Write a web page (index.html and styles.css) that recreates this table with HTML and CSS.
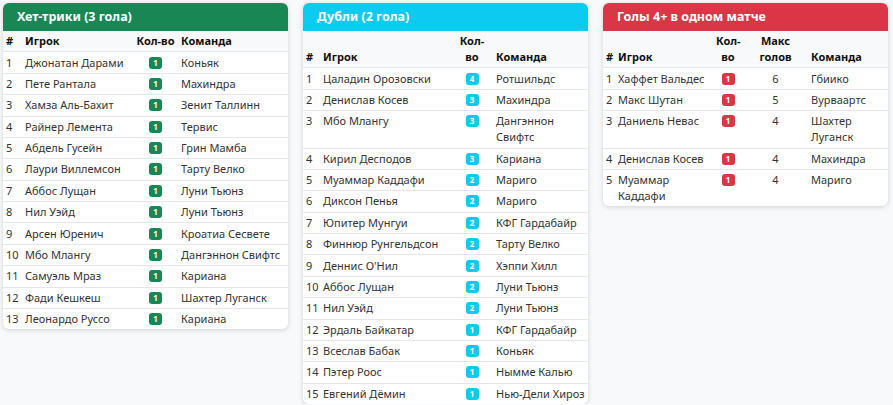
FILE: index.html
```html
<!DOCTYPE html>
<html lang="ru">
<head>
<meta charset="utf-8">
<link rel="stylesheet" href="styles.css">
</head>
<body>
<div class="grid">
  <div class="card">
    <div class="card-header hdr-green">Хет-трики (3 гола)</div>
    <table class="tbl t1">
      <colgroup><col class="c-num"><col class="c-pl"><col class="c-cnt"><col></colgroup>
      <thead><tr><th>#</th><th>Игрок</th><th class="ctr nw">Кол-во</th><th>Команда</th></tr></thead>
      <tbody>
        <tr><td>1</td><td>Джонатан Дарами</td><td class="ctr"><span class="badge b-green">1</span></td><td>Коньяк</td></tr>
        <tr><td>2</td><td>Пете Рантала</td><td class="ctr"><span class="badge b-green">1</span></td><td>Махиндра</td></tr>
        <tr><td>3</td><td>Хамза Аль-Бахит</td><td class="ctr"><span class="badge b-green">1</span></td><td>Зенит Таллинн</td></tr>
        <tr><td>4</td><td>Райнер Лемента</td><td class="ctr"><span class="badge b-green">1</span></td><td>Тервис</td></tr>
        <tr><td>5</td><td>Абдель Гусейн</td><td class="ctr"><span class="badge b-green">1</span></td><td>Грин Мамба</td></tr>
        <tr><td>6</td><td>Лаури Виллемсон</td><td class="ctr"><span class="badge b-green">1</span></td><td>Тарту Велко</td></tr>
        <tr><td>7</td><td>Аббос Лущан</td><td class="ctr"><span class="badge b-green">1</span></td><td>Луни Тьюнз</td></tr>
        <tr><td>8</td><td>Нил Уэйд</td><td class="ctr"><span class="badge b-green">1</span></td><td>Луни Тьюнз</td></tr>
        <tr><td>9</td><td>Арсен Юренич</td><td class="ctr"><span class="badge b-green">1</span></td><td>Кроатиа Сесвете</td></tr>
        <tr><td>10</td><td>Мбо Млангу</td><td class="ctr"><span class="badge b-green">1</span></td><td>Дангэннон Свифтс</td></tr>
        <tr><td>11</td><td>Самуэль Мраз</td><td class="ctr"><span class="badge b-green">1</span></td><td>Кариана</td></tr>
        <tr><td>12</td><td>Фади Кешкеш</td><td class="ctr"><span class="badge b-green">1</span></td><td>Шахтер Луганск</td></tr>
        <tr><td>13</td><td>Леонардо Руссо</td><td class="ctr"><span class="badge b-green">1</span></td><td>Кариана</td></tr>
      </tbody>
    </table>
  </div>

  <div class="card">
    <div class="card-header hdr-cyan">Дубли (2 гола)</div>
    <table class="tbl t2">
      <colgroup><col class="c-num"><col class="c-pl"><col class="c-cnt"><col></colgroup>
      <thead><tr><th>#</th><th>Игрок</th><th class="ctr">Кол-во</th><th>Команда</th></tr></thead>
      <tbody>
        <tr><td>1</td><td>Цаладин Орозовски</td><td class="ctr"><span class="badge b-cyan">4</span></td><td>Ротшильдс</td></tr>
        <tr><td>2</td><td>Денислав Косев</td><td class="ctr"><span class="badge b-cyan">3</span></td><td>Махиндра</td></tr>
        <tr><td>3</td><td>Мбо Млангу</td><td class="ctr"><span class="badge b-cyan">3</span></td><td>Дангэннон Свифтс</td></tr>
        <tr><td>4</td><td>Кирил Десподов</td><td class="ctr"><span class="badge b-cyan">3</span></td><td>Кариана</td></tr>
        <tr><td>5</td><td>Муаммар Каддафи</td><td class="ctr"><span class="badge b-cyan">2</span></td><td>Мариго</td></tr>
        <tr><td>6</td><td>Диксон Пенья</td><td class="ctr"><span class="badge b-cyan">2</span></td><td>Мариго</td></tr>
        <tr><td>7</td><td>Юпитер Мунгуи</td><td class="ctr"><span class="badge b-cyan">2</span></td><td>КФГ Гардабайр</td></tr>
        <tr><td>8</td><td>Финнюр Рунгельдсон</td><td class="ctr"><span class="badge b-cyan">2</span></td><td>Тарту Велко</td></tr>
        <tr><td>9</td><td>Деннис О'Нил</td><td class="ctr"><span class="badge b-cyan">2</span></td><td>Хэппи Хилл</td></tr>
        <tr><td>10</td><td>Аббос Лущан</td><td class="ctr"><span class="badge b-cyan">2</span></td><td>Луни Тьюнз</td></tr>
        <tr><td>11</td><td>Нил Уэйд</td><td class="ctr"><span class="badge b-cyan">2</span></td><td>Луни Тьюнз</td></tr>
        <tr><td>12</td><td>Эрдаль Байкатар</td><td class="ctr"><span class="badge b-cyan">1</span></td><td>КФГ Гардабайр</td></tr>
        <tr><td>13</td><td>Всеслав Бабак</td><td class="ctr"><span class="badge b-cyan">1</span></td><td>Коньяк</td></tr>
        <tr><td>14</td><td>Пэтер Роос</td><td class="ctr"><span class="badge b-cyan">1</span></td><td>Нымме Калью</td></tr>
        <tr><td>15</td><td>Евгений Дёмин</td><td class="ctr"><span class="badge b-cyan">1</span></td><td>Нью-Дели Хироз</td></tr>
      </tbody>
    </table>
  </div>

  <div class="card">
    <div class="card-header hdr-red">Голы 4+ в одном матче</div>
    <table class="tbl t3">
      <colgroup><col class="c-num"><col class="c-pl"><col class="c-cnt"><col class="c-max"><col></colgroup>
      <thead><tr><th>#</th><th>Игрок</th><th class="ctr">Кол-во</th><th class="ctr">Макс голов</th><th>Команда</th></tr></thead>
      <tbody>
        <tr><td>1</td><td>Хаффет Вальдес</td><td class="ctr"><span class="badge b-red">1</span></td><td class="ctr">6</td><td>Гбиико</td></tr>
        <tr><td>2</td><td>Макс Шутан</td><td class="ctr"><span class="badge b-red">1</span></td><td class="ctr">5</td><td>Вурваартс</td></tr>
        <tr><td>3</td><td>Даниель Невас</td><td class="ctr"><span class="badge b-red">1</span></td><td class="ctr">4</td><td>Шахтер Луганск</td></tr>
        <tr><td>4</td><td>Денислав Косев</td><td class="ctr"><span class="badge b-red">1</span></td><td class="ctr">4</td><td>Махиндра</td></tr>
        <tr><td>5</td><td>Муаммар Каддафи</td><td class="ctr"><span class="badge b-red">1</span></td><td class="ctr">4</td><td>Мариго</td></tr>
      </tbody>
    </table>
  </div>
</div>
</body>
</html>
```

FILE: styles.css
```css
* { box-sizing: border-box; }
html, body { margin: 0; padding: 0; }
body {
  background: #f8f9fa;
  font-family: "Noto Sans", "Open Sans", sans-serif;
  color: #212529;
  font-size: 11px;
}
.grid {
  display: grid;
  grid-template-columns: repeat(3, 285px);
  column-gap: 15px;
  align-items: start;
  padding: 3px 5px 0 3px;
}
.card {
  background: #fff;
  border-radius: 6px;
  overflow: hidden;
  box-shadow: 0 1px 5px rgba(0, 0, 0, 0.16);
}
.card-header {
  color: #fff;
  font-weight: 700;
  font-size: 12.5px;
  line-height: 20px;
  padding: 4px 14px;
}
.hdr-green { background: #198754; }
.hdr-cyan { background: #0dcaf0; }
.hdr-red { background: #dc3545; }

.tbl {
  width: 100%;
  border-collapse: collapse;
  table-layout: fixed;
}
.tbl th, .tbl td {
  padding: 2.2px 3px;
  line-height: 16px;
  text-align: left;
  vertical-align: top;
  border-bottom: 1px solid #e3e6ea;
}
.tbl th {
  font-weight: 700;
  vertical-align: bottom;
  background: #f8f9fa;
  color: #111;
}
.tbl td { color: #333; }
.tbl tbody tr:last-child td { border-bottom: 0; }
.tbl .ctr { text-align: center; }
.tbl .nw { white-space: nowrap; }

.t1 .c-num { width: 19px; }
.t1 .c-pl { width: 111px; }
.t1 .c-cnt { width: 45px; }

.t2 .c-num { width: 17px; }
.t2 .c-pl { width: 131px; }
.t2 .c-cnt { width: 42px; }

.t3 .c-num { width: 12px; }
.t3 .c-pl { width: 98px; }
.t3 .c-cnt { width: 30px; }
.t3 .c-max { width: 65px; }

.badge {
  display: inline-block;
  min-width: 13px;
  padding: 2px 4px;
  font-size: 8px;
  font-weight: 700;
  line-height: 8px;
  color: #fff;
  border-radius: 3px;
  vertical-align: 1px;
}
.b-green { background: #198754; }
.b-cyan { background: #0dcaf0; }
.b-red { background: #dc3545; }
```
